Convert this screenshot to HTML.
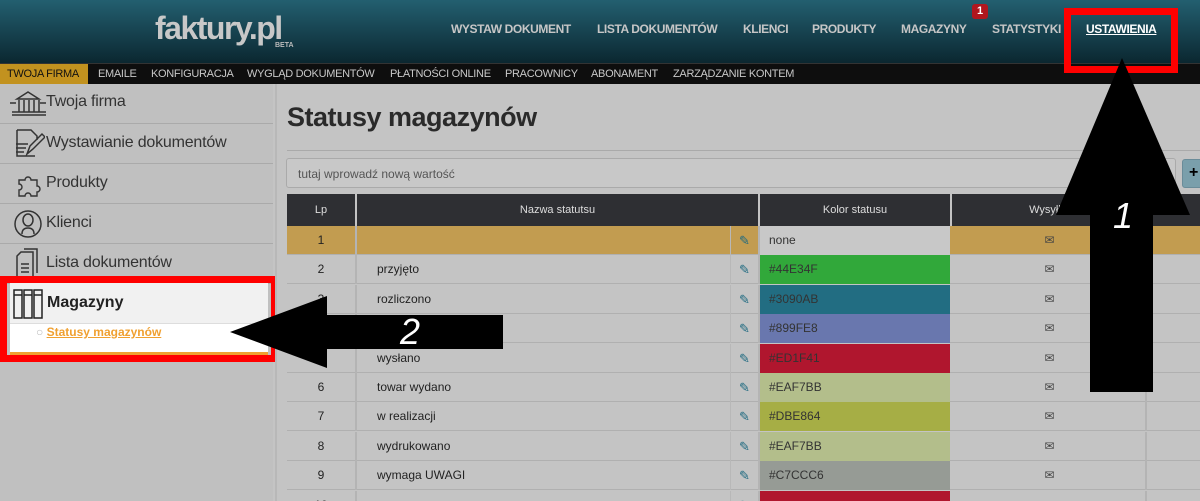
<!DOCTYPE html>
<html><head><meta charset="utf-8"><style>
*{box-sizing:border-box;margin:0;padding:0}
html,body{width:1200px;height:501px;overflow:hidden}
body{background:#c4c4c4;font-family:"Liberation Sans",sans-serif;position:relative}
.hdr{position:absolute;left:0;top:0;width:1200px;height:63px;background:linear-gradient(#235f70,#0b2730)}
.logo{position:absolute;left:155px;top:10px;font-size:32px;font-weight:bold;color:#c8c8c8;letter-spacing:-1.5px}
.beta{position:absolute;left:275px;top:42px;font-size:7px;color:#bbb;font-weight:bold}
.nav{position:absolute;top:22px;font-size:12px;font-weight:bold;color:#c6c6c6;letter-spacing:-0.4px}
.sub{position:absolute;left:0;top:63px;width:1200px;height:21px;background:#0e0e0e;border-top:1px solid #333}
.sub span{position:absolute;top:4px;font-size:11px;color:#c8c8c8;letter-spacing:-0.3px}
.side{position:absolute;left:0;top:84px;width:273px;height:417px;background:#c0c0c0}
.si{position:absolute;left:0;width:273px;height:40px;border-bottom:1px solid #aaa;font-size:16px;color:#333}
.si span{position:absolute;left:46px;top:10px;letter-spacing:-0.2px}
.main{position:absolute;left:275px;top:84px;width:925px;height:417px;background:#c4c4c4;border-left:2px solid #b8b8b8}
.row{position:absolute;left:287px;height:29px;border-bottom:1px solid #b0b0b0;width:913px}
.c{position:absolute;top:0;height:29px;font-size:12px;color:#222;line-height:29px}
</style></head><body>
<div class="hdr">
<div class="logo">faktury.pl</div><div class="beta">BETA</div>
<div class="nav" style="left:451px">WYSTAW DOKUMENT</div>
<div class="nav" style="left:597px">LISTA DOKUMENTÓW</div>
<div class="nav" style="left:743px">KLIENCI</div>
<div class="nav" style="left:812px">PRODUKTY</div>
<div class="nav" style="left:901px">MAGAZYNY</div>
<div style="position:absolute;left:972px;top:4px;width:16px;height:15px;background:#b0161e;border-radius:3px;color:#fff;font-size:11px;font-weight:bold;text-align:center;line-height:15px">1</div>
<div class="nav" style="left:992px">STATYSTYKI</div>
<div class="nav" style="left:1086px;color:#fff;text-decoration:underline">USTAWIENIA</div>
</div>
<div class="sub">
<div style="position:absolute;left:0;top:0;width:88px;height:20px;background:#c2921f"></div>
<span style="left:7px;color:#111">TWOJA FIRMA</span>
<span style="left:98px">EMAILE</span><span style="left:151px">KONFIGURACJA</span><span style="left:247px">WYGLĄD DOKUMENTÓW</span><span style="left:390px">PŁATNOŚCI ONLINE</span><span style="left:505px">PRACOWNICY</span><span style="left:591px">ABONAMENT</span><span style="left:673px">ZARZĄDZANIE KONTEM</span>
</div>
<div class="side">
<div class="si" style="top:0"><span style="top:9px">Twoja firma</span><svg style="position:absolute;left:9px;top:6px" width="38" height="30" fill="none" stroke="#333" stroke-width="1.5"><path d="M8 9L19 2L30 9ZM10 10v12M15 10v12M20 10v12M25 10v12M30 10v12M3 22h34M3 25h34M1 13h6M31 13h6"/></svg></div>
<div class="si" style="top:40px"><span>Wystawianie dokumentów</span><svg style="position:absolute;left:11px;top:4px" width="34" height="32" fill="none" stroke="#333" stroke-width="1.5"><path d="M6 2h14l6 6v4M6 2v26h18M5 16h12M5 20h10M5 24h8M16 26l3-8 12-12 3 3-12 12z"/></svg></div>
<div class="si" style="top:80px"><span>Produkty</span><svg style="position:absolute;left:15px;top:8px" width="28" height="26" fill="none" stroke="#333" stroke-width="1.4"><path d="M4 8h6a3 3 0 1 1 6 0h6v6a3 3 0 1 1 0 6v4h-6a3 3 0 1 0-6 0H4v-6a3 3 0 1 0 0-6z"/></svg></div>
<div class="si" style="top:120px"><span>Klienci</span><svg style="position:absolute;left:13px;top:5px" width="30" height="30" fill="none" stroke="#333" stroke-width="1.5"><circle cx="15" cy="15" r="13"/><path d="M9 25c0-5 3-6 6-6s6 1 6 6M10 11a5 6 0 1 0 10 0a5 6 0 1 0-10 0"/></svg></div>
<div class="si" style="top:160px"><span>Lista dokumentów</span><svg style="position:absolute;left:15px;top:4px" width="26" height="34" fill="none" stroke="#333" stroke-width="1.5"><path d="M6 4h12v26H2V8zM9 1h13v24M6 16h8M6 20h8M6 24h8"/></svg></div>
</div>
<div style="position:absolute;left:10px;top:283px;width:258px;height:40px;background:#f1f1f1"></div>
<div style="position:absolute;left:10px;top:323px;width:258px;height:32px;background:#fff;border-bottom:3px solid #f0a030;border-top:1px solid #ddd"></div>
<svg style="position:absolute;left:12px;top:288px" width="34" height="32" fill="none" stroke="#222" stroke-width="1.5"><path d="M2 2h8v28H2zM12 2h8v28h-8zM22 2h8v28h-8zM2 7h8M12 7h8M22 7h8"/></svg>
<div style="position:absolute;left:47px;top:294px;font-size:16px;font-weight:bold;color:#222">Magazyny</div>
<div style="position:absolute;left:36px;top:325px;font-size:12px;font-weight:bold;color:#f0a030"><span style="color:#bbb">○ </span><u>Statusy magazynów</u></div>
<div style="position:absolute;left:0;top:276px;width:278px;height:86px;border:7px solid #f00"></div>
<div class="main"></div>
<div style="position:absolute;left:287px;top:102px;font-size:27px;font-weight:bold;color:#2a2a2a;letter-spacing:-0.5px">Statusy magazynów</div>
<div style="position:absolute;left:287px;top:150px;width:913px;height:1px;background:#aaa"></div>
<div style="position:absolute;left:286px;top:158px;width:890px;height:30px;border:1px solid #aaa;border-radius:3px;background:#c8c8c8;font-size:12px;color:#555;padding:8px 11px">tutaj wprowadź nową wartość</div>
<div style="position:absolute;left:1182px;top:159px;width:30px;height:29px;background:#7a9fab;border:1px solid #6a8c99;border-radius:3px;font-weight:bold;font-size:16px;padding:4px 6px">+</div>
<div style="position:absolute;left:287px;top:194px;width:913px;height:32px;background:#2e2f33;color:#ddd;font-size:11px">
<div style="position:absolute;left:0;width:68px;top:10px;text-align:center">Lp</div>
<div style="position:absolute;left:68px;width:2px;height:32px;background:#c4c4c4"></div>
<div style="position:absolute;left:70px;width:401px;top:10px;text-align:center">Nazwa statutsu</div>
<div style="position:absolute;left:471px;width:2px;height:32px;background:#c4c4c4"></div>
<div style="position:absolute;left:473px;width:190px;top:10px;text-align:center">Kolor statusu</div>
<div style="position:absolute;left:663px;width:2px;height:32px;background:#c4c4c4"></div>
<div style="position:absolute;left:665px;width:195px;top:10px;text-align:center">Wysyłka</div>
<div style="position:absolute;left:858px;width:2px;height:32px;background:#c4c4c4"></div>
</div>
<div id="rows"></div>
<script>
var d=[["1","","none","#c8c8c8"],["2","przyjęto","#44E34F","#31a83a"],["3","rozliczono","#3090AB","#226d82"],["4","","#899FE8","#6977ae"],["5","wysłano","#ED1F41","#b0162e"],["6","towar wydano","#EAF7BB","#b3be8b"],["7","w realizacji","#DBE864","#a6ae45"],["8","wydrukowano","#EAF7BB","#b3be8b"],["9","wymaga UWAGI","#C7CCC6","#969b95"],["10","","","#b0162e"]];
var h="";
d.forEach(function(r,i){var y=226+i*29.4;var bg=i==0?"#c29c50":"#c4c4c4";
h+='<div class="row" style="top:'+y+'px;background:'+bg+'">'+
'<div class="c" style="left:0;width:68px;text-align:center">'+r[0]+'</div>'+
'<div style="position:absolute;left:68px;top:0;width:2px;height:29px;background:#b4b4b4"></div>'+
'<div class="c" style="left:90px;font-size:12px">'+r[1]+'</div>'+
'<div style="position:absolute;left:443px;top:0;width:1px;height:29px;background:#b8b8b8"></div>'+
'<div class="c" style="left:452px;color:#1f6a80;font-size:13px">✎</div>'+
'<div style="position:absolute;left:471px;top:0;width:2px;height:29px;background:#b4b4b4"></div>'+
'<div class="c" style="left:473px;width:190px;background:'+r[3]+';padding-left:9px;color:#333">'+r[2]+'</div>'+
'<div class="c" style="left:665px;width:195px;text-align:center;color:#444">✉</div>'+
'<div style="position:absolute;left:858px;top:0;width:2px;height:29px;background:#b4b4b4"></div></div>';});
document.getElementById("rows").innerHTML=h;
</script>
<div style="position:absolute;left:1064px;top:8px;width:114px;height:65px;border:7px solid #f00"></div>
<svg style="position:absolute;left:0;top:0" width="1200" height="501">
<polygon points="1122,58 1190,215 1153,215 1153,392 1090,392 1090,215 1056,215" fill="#000"/>
<polygon points="230,332 327,296 327,315 503,315 503,349 327,349 327,368" fill="#000"/>
<text x="1113" y="228" fill="#fff" font-size="36" font-family="Liberation Sans" font-style="italic">1</text>
<text x="400" y="344" fill="#fff" font-size="36" font-family="Liberation Sans" font-style="italic">2</text>
</svg>
</body></html>
